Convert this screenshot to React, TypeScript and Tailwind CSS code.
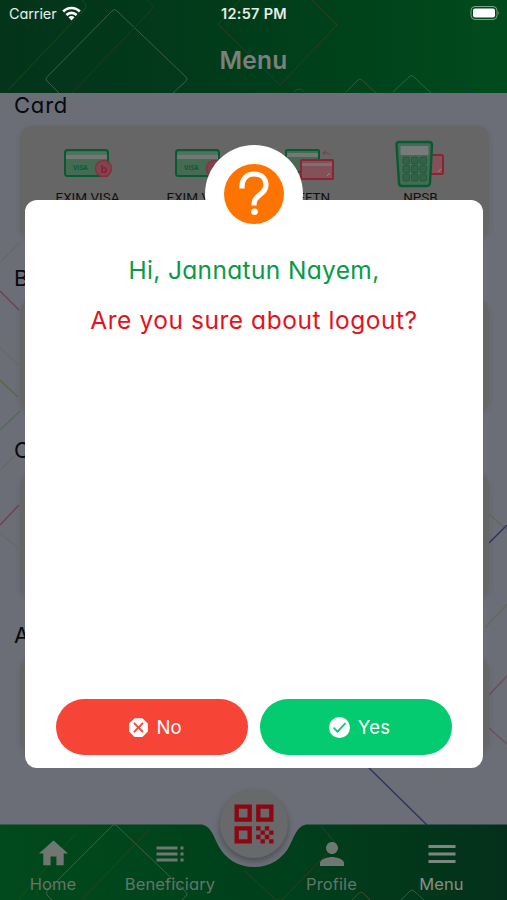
import type { ReactNode } from "react";
import { MdDangerous, MdHome, MdMenu, MdPerson, MdQrCode, MdToc } from "react-icons/md";

function StatusBar() {
  return (
    <div className="relative flex h-7 items-center justify-between pl-[9px] pr-[6px] text-[14.5px] text-[#e6ede6]">
      <div className="flex items-center gap-[5px]">
        <span className="tracking-[-0.1px]">Carrier</span>
        <svg width="19" height="15" viewBox="0 0 19 15" fill="none" stroke="#fff" strokeWidth="2.6" className="-translate-y-px">
          <path d="M1.2 5.5a11.6 11.6 0 0 1 16.6 0" />
          <path d="M4.4 9a7.2 7.2 0 0 1 10.2 0" />
          <path d="M9.5 14.5 6.5 11.3a4.2 4.2 0 0 1 6 0z" fill="#fff" stroke="none" />
        </svg>
      </div>
      <span className="absolute left-[221px] font-semibold tracking-[0.3px]">12:57 PM</span>
      <svg width="31" height="16" viewBox="0 0 31 16">
        <rect x="1" y="0.5" width="26" height="13" rx="4" fill="none" stroke="#7f9f88" />
        <rect x="3" y="2.5" width="22" height="9" rx="2" fill="#fff" />
        <path d="M28.5 5v4q1.6-2 0-4" fill="#7f9f88" />
      </svg>
    </div>
  );
}

function HeaderLines() {
  return (
    <svg className="absolute inset-0" width="507" height="93" fill="none" strokeWidth="1">
      <path d="M59 93 47 81q-2-2 0-4L112 11q2-3 5 0L186 77q2 2 0 4L173 93" stroke="#3d5c43" />
      <path d="M8 90 86 8q1-3-4-8" stroke="#174a1b" />
      <path d="M72 93 154 7l-7-7" stroke="#263b1d" />
      <path d="M240 0 218 24l62 61 57-60L312 0" stroke="#2f3d20" />
      <path d="m346 92 12-12q2-2 4 0l14 13" stroke="#4b4a2a" />
      <path d="m393 92 16-15q2-3 5 0l17 16" stroke="#27673a" />
      <path d="m440 92 12-12q3-2 5 0l14 13" stroke="#0d394a" />
      <path d="M294 92q5-6 10 0" stroke="#195539" />
    </svg>
  );
}

function VisaCard() {
  return (
    <svg width="52" height="48" viewBox="0 0 52 48">
      <rect x="3" y="10" width="43" height="26" rx="2.5" fill="#456b55" stroke="#075b31" strokeWidth="2" />
      <rect x="4.5" y="12" width="40" height="3" fill="#52705f" />
      <path d="M4 15h41v4H4z" fill="#747775" />
      <text x="11" y="30" fontSize="6.5" fontWeight="700" fill="#075b31" fontFamily="Open Sans">VISA</text>
      <circle cx="41.5" cy="28.5" r="8" fill="#7e4550" stroke="#8c2e40" strokeWidth="1.5" />
      <text x="38.6" y="32.5" fontSize="11" fontWeight="700" fill="#8c1e34" fontFamily="Open Sans">b</text>
    </svg>
  );
}

function TransferCards() {
  return (
    <svg width="52" height="48" viewBox="0 0 52 48">
      <rect x="2" y="10" width="33" height="22" rx="1" fill="#456b55" stroke="#075b31" strokeWidth="2" />
      <path d="M3 13h31v4H3z" fill="#747775" />
      <rect x="17" y="20" width="32" height="19" rx="1" fill="#82515a" stroke="#8c2434" strokeWidth="2" />
      <path d="M18 23h30v3H18z" fill="#777174" />
      <path d="m43 36 3-3" stroke="#9a858a" />
      <path d="M47 15q-3-3-8-2m3-2-3 2 2 2" fill="none" stroke="#873840" />
    </svg>
  );
}

function PosTerminal() {
  return (
    <svg width="52" height="48" viewBox="0 0 52 48">
      <rect x="35" y="15" width="13" height="19" rx="1.5" fill="#82515a" stroke="#8c2434" strokeWidth="2" />
      <path d="m43 32 3-3" stroke="#9a858a" />
      <path d="M4 2h30q3 0 3 3l-2 38q-.3 3-3 3H7q-3 0-3-3L1.500 5q0-3 2.500-3z" fill="#456b55" stroke="#075b31" strokeWidth="2.4" />
      <path d="M5.500 6h28v9h-28z" fill="#777b79" />
      {[17, 25.5, 34].map((y) =>
        [8, 16.5, 25].map((x) => (
          <rect key={`${x}-${y}`} x={x} y={y} width="6.500" height="7" rx="1.5" fill="#326247" stroke="#19583a" strokeWidth="0.8" />
        ))
      )}
    </svg>
  );
}

function MenuItem({ icon, label }: { icon: ReactNode; label: string }) {
  return (
    <div className="flex w-[111px] flex-col items-center">
      {icon}
      <span className="whitespace-nowrap font-[Roboto] text-[13.5px] leading-[18px] text-[#101010]">{label}</span>
    </div>
  );
}

function Backdrop() {
  return (
    <svg className="absolute left-0 top-0" width="507" height="900" fill="none" strokeWidth="1.1">
      <path d="M0 262 20 243M0 470 18 453M0 348 18 365M0 533 18 548" stroke="#68695f" />
      <path d="m0 291 19 19M0 525l19-20" stroke="#70414f" strokeWidth="1.4" />
      <path d="m0 380 18 17" stroke="#5a6840" strokeWidth="1.3" />
      <path d="m0 430 20-19" stroke="#4e695b" />
      <path d="m489 514 18 16M485 628l22-24" stroke="#606850" />
      <path d="m489 543 18-18M369 768l58 57" stroke="#303462" strokeWidth="1.5" />
      <path d="m489 695 18-19M489 728l18 16" stroke="#6f4c59" strokeWidth="1.3" />
    </svg>
  );
}

function NavItem({ icon, label, className }: { icon: ReactNode; label: string; className: string }) {
  return (
    <div className={`flex flex-col items-center ${className}`}>
      {icon}
      <span className="mt-px whitespace-nowrap leading-6">{label}</span>
    </div>
  );
}

function BottomNav() {
  return (
    <nav className="relative h-[76px] text-[16.5px] tracking-[0.1px] text-[#64756a]">
      <svg className="absolute inset-0" width="507" height="76" fill="none">
        <defs>
          <linearGradient id="nav">
            <stop stopColor="#004a1c" />
            <stop offset=".6" stopColor="#003f1b" />
            <stop offset="1" stopColor="#04301a" />
          </linearGradient>
        </defs>
        <path d="M0 .5H200C210 .5 213 11 218 21 225 35 238 43 254 43S283 35 290 21C295 11 298 .5 308 .5H507V76H0z" fill="url(#nav)" />
        <path d="M52 76 47 71q-1-2 0-4L113 1h3l70 67q2 2 0 4l-4 4" stroke="#3e6045" />
        <path d="M18 76 76 9" stroke="#174f1f" />
        <path d="m82 75 68-70" stroke="#2f421f" />
        <path d="m245 47 31 29h6l54-56L321 2" stroke="#363d20" />
        <path d="m352 76 7-7q2-2 4 0l7 7" stroke="#4c482a" />
        <path d="m401 76 9-9q2-2 4 0l10 9" stroke="#315c37" />
      </svg>
      <div className="absolute left-[220px] top-[-34px] flex h-[68px] w-[68px] items-center justify-center rounded-full bg-[#68696b] shadow-[0_3px_6px_rgba(0,0,0,0.3)]">
        <MdQrCode size={52} color="#8b0711" />
      </div>
      <div className="relative flex pt-[11px]">
        <NavItem className="w-[106px]" icon={<MdHome size={35} color="#707671" className="mb-px translate-y-px" />} label="Home" />
        <NavItem className="w-[128px]" icon={<MdToc size={36} color="#707671" className="translate-y-px" />} label="Beneficiary" />
        <NavItem className="ml-[42px] w-[111px]" icon={<MdPerson size={36} color="#707671" className="translate-y-px" />} label="Profile" />
        <NavItem className="w-[109px] text-[#849088]" icon={<MdMenu size={36} color="#7c8780" className="translate-y-px" />} label="Menu" />
      </div>
    </nav>
  );
}

function LogoutDialog() {
  return (
    <div className="absolute left-[25px] top-[200px] flex h-[568px] w-[458px] flex-col items-center rounded-[12px] bg-white">
      <div className="absolute left-[180px] top-[-55px] flex h-[98px] w-[98px] items-center justify-center rounded-full bg-white">
        <svg width="60" height="60" viewBox="0 0 60 60" fill="none">
          <circle cx="30" cy="30" r="30" fill="#ff7400" />
          <path d="M18 24.500v-2.500C18.500 14 23 10 30 10c7.500 0 12 4.500 12 11 0 5-3.500 7.500-7 10.500-4 3.500-5 5-5 10" stroke="#fff" strokeWidth="5.200" />
          <circle cx="30.500" cy="47.800" r="3.300" fill="#fff" />
        </svg>
      </div>
      <p className="mt-[52px] whitespace-nowrap text-[24.5px] leading-9 tracking-[0.35px] text-[#0a9a45]">Hi, Jannatun Nayem,</p>
      <p className="mt-[14px] whitespace-nowrap text-[24.5px] leading-9 tracking-[0.55px] text-[#e3121b]">Are you sure about logout?</p>
      <div className="mt-auto flex gap-3 pb-[13px] text-[18.5px] text-white">
        <button className="flex h-14 w-[192px] items-center justify-center gap-[5px] rounded-full bg-[#f64437] pl-[4px]">
          <MdDangerous size={25} />
          <span className="pt-px">No</span>
        </button>
        <button className="flex h-14 w-[192px] items-center justify-center gap-[8px] rounded-full bg-[#04ca70] pl-[7px] tracking-[0.3px]">
          <svg width="21" height="21" viewBox="0 0 21 21" fill="none">
            <circle cx="10.500" cy="10.500" r="10.500" fill="#fff" />
            <path d="m4.500 10.700 4 4 8-8.500" stroke="#04ca70" strokeWidth="1.700" />
          </svg>
          <span className="pt-px">Yes</span>
        </button>
      </div>
    </div>
  );
}

export default function App() {
  return (
    <div className="relative flex h-[900px] w-[507px] flex-col overflow-hidden bg-[#6b6e76] font-[Inter,sans-serif] [font-feature-settings:'cv11']">
      <Backdrop />
      <header className="relative h-[93px] shrink-0 bg-linear-to-r from-[#04341a] via-[#003d1a] to-[#004b1c]">
        <HeaderLines />
        <StatusBar />
        <h1 className="relative mt-[15px] text-center text-[24.5px] font-semibold leading-[34px] tracking-[0.2px] text-[#7b807a]">Menu</h1>
      </header>
      <main className="relative flex-1 pl-[20px] pr-[18px] text-[22px] leading-[26px] text-[#07090d]">
        <h2 className="-ml-[6px] -mt-px tracking-[0.8px]">Card</h2>
        <section className="mt-[8px] flex h-[112px] items-start rounded-[12px] bg-[#666666] pl-[12px] pt-[14px] shadow-[0_2px_5px_rgba(60,65,60,0.18)]">
          <MenuItem icon={<VisaCard />} label="EXIM VISA" />
          <MenuItem icon={<VisaCard />} label="EXIM VISA" />
          <MenuItem icon={<TransferCards />} label="BEFTN" />
          <MenuItem icon={<PosTerminal />} label="NPSB" />
        </section>
        <h2 className="-ml-[6px] mt-[27px]">B</h2>
        <section className="mt-[9px] h-[112px] rounded-[12px] bg-[#666666] shadow-[0_2px_5px_rgba(60,65,60,0.18)]" />
        <h2 className="-ml-[6px] mt-[25px]">C</h2>
        <section className="mt-[11px] h-[124px] rounded-[12px] bg-[#666666] shadow-[0_2px_5px_rgba(60,65,60,0.18)]" />
        <h2 className="-ml-[6px] mt-[24px]">A</h2>
        <section className="mt-[10px] h-[94px] rounded-[12px] bg-[#666666] shadow-[0_2px_5px_rgba(60,65,60,0.18)]" />
      </main>
      <BottomNav />
      <LogoutDialog />
    </div>
  );
}
